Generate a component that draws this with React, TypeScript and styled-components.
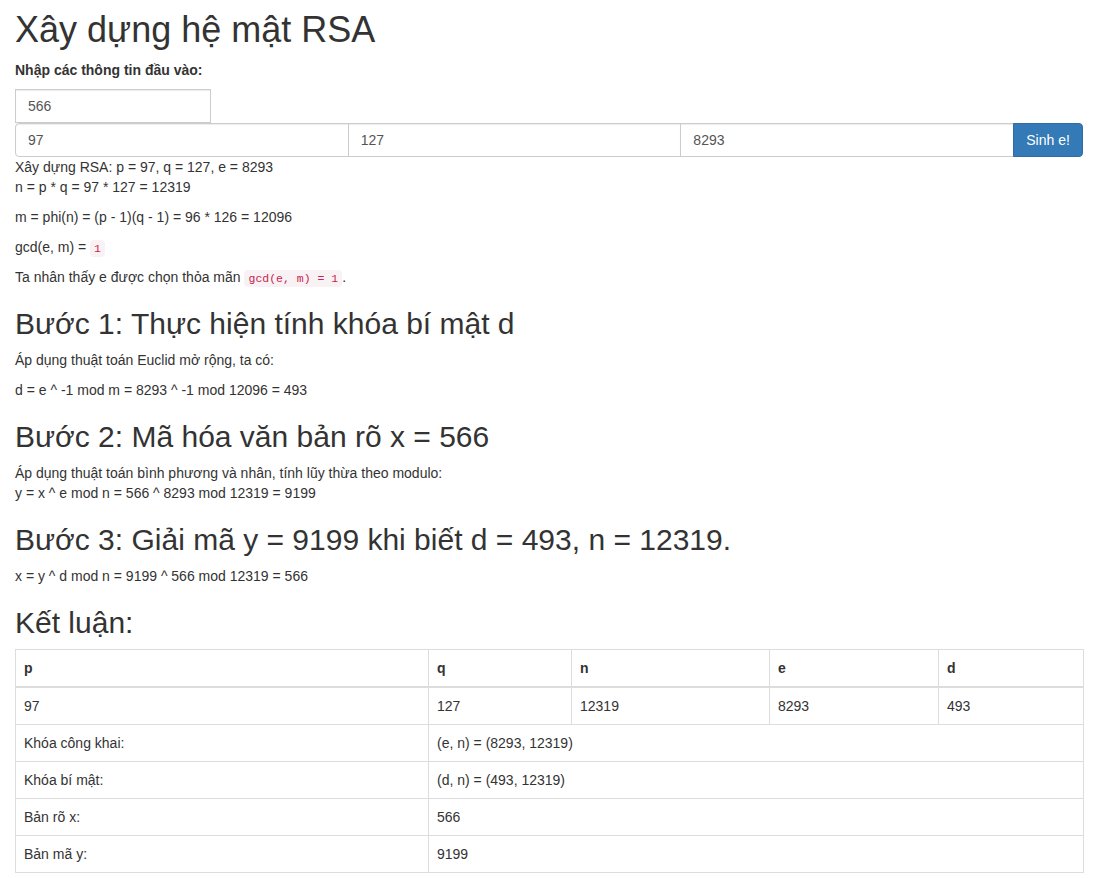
import React from "react";
import styled, { createGlobalStyle } from "styled-components";

const Global = createGlobalStyle`
  html, body { margin: 0; padding: 0; background: #fff; }
  body {
    font-family: "Liberation Sans", Arial, sans-serif;
    font-size: 14px;
    line-height: 20px;
    color: #333;
  }
  * { box-sizing: border-box; }
`;

const Page = styled.div`
  width: 1068px;
  margin-left: 15px;
  padding-top: 10px;
`;

const H1 = styled.h1`
  font-size: 36px;
  font-weight: 500;
  line-height: 39.6px;
  margin: 0 0 10px;
`;

const H2 = styled.h2`
  font-size: 30px;
  font-weight: 500;
  line-height: 33px;
  margin: 20px 0 10px;
`;

const Label = styled.label`
  display: block;
  font-weight: bold;
  margin-bottom: 9px;
`;

const Input = styled.input<{ $w?: number; $pos?: "first" | "mid" | "single" }>`
  display: block;
  height: 34px;
  padding: 6px 12px;
  font-family: "Liberation Sans", Arial, sans-serif;
  font-size: 14px;
  color: #555;
  background: #fff;
  border: 1px solid #ccc;
  border-radius: ${(p) => (p.$pos === "first" ? "4px 0 0 4px" : "0")};
  box-shadow: inset 0 1px 1px rgba(0, 0, 0, 0.075);
  width: ${(p) => (p.$w ? `${p.$w}px` : "100%")};
  flex: ${(p) => (p.$w ? "none" : "1 1 0")};
  min-width: 0;
  margin-left: ${(p) => (p.$pos === "mid" ? "-1px" : "0")};
  outline: none;
`;

const Group = styled.div`
  display: flex;
  height: 34px;
`;

const Button = styled.button`
  width: 70px;
  flex: none;
  height: 34px;
  margin-left: -1px;
  padding: 6px 12px;
  font-family: "Liberation Sans", Arial, sans-serif;
  font-size: 14px;
  color: #fff;
  background: #337ab7;
  border: 1px solid #2e6da4;
  border-radius: 0 4px 4px 0;
  cursor: pointer;
`;

const P = styled.p`
  margin: 0 0 10px;
`;

const Code = styled.code`
  padding: 2px 4px;
  font-family: "Liberation Mono", "DejaVu Sans Mono", monospace;
  font-size: 11.5px;
  line-height: 1;
  color: #c7254e;
  background: #f9f2f4;
  border-radius: 4px;
`;

const Table = styled.table`
  width: 100%;
  border-collapse: collapse;
  border-spacing: 0;
  border: 1px solid #ddd;
  margin-bottom: 20px;
  table-layout: fixed;
`;

const Th = styled.th`
  text-align: left;
  font-weight: bold;
  padding: 8px;
  line-height: 20px;
  border: 1px solid #ddd;
  border-bottom: 2px solid #ddd;
  vertical-align: bottom;
`;

const Td = styled.td`
  padding: 8px;
  line-height: 20px;
  border: 1px solid #ddd;
  vertical-align: top;
`;

export default function App() {
  return (
    <>
      <Global />
      <Page>
        <H1>Xây dựng hệ mật RSA</H1>
        <Label>Nhập các thông tin đầu vào:</Label>
        <Input $w={196} $pos="single" defaultValue="566" />
        <Group>
          <Input $pos="first" defaultValue="97" />
          <Input $pos="mid" defaultValue="127" />
          <Input $pos="mid" defaultValue="8293" />
          <Button>Sinh e!</Button>
        </Group>
        <P>
          Xây dựng RSA: p = 97, q = 127, e = 8293
          <br />n = p * q = 97 * 127 = 12319
        </P>
        <P>m = phi(n) = (p - 1)(q - 1) = 96 * 126 = 12096</P>
        <P>
          gcd(e, m) = <Code>1</Code>
        </P>
        <P>
          Ta nhân thấy e được chọn thỏa mãn <Code>gcd(e, m) = 1</Code>.
        </P>

        <H2>Bước 1: Thực hiện tính khóa bí mật d</H2>
        <P>Áp dụng thuật toán Euclid mở rộng, ta có:</P>
        <P>d = e ^ -1 mod m = 8293 ^ -1 mod 12096 = 493</P>

        <H2>Bước 2: Mã hóa văn bản rõ x = 566</H2>
        <P>
          Áp dụng thuật toán bình phương và nhân, tính lũy thừa theo modulo:
          <br />y = x ^ e mod n = 566 ^ 8293 mod 12319 = 9199
        </P>

        <H2>Bước 3: Giải mã y = 9199 khi biết d = 493, n = 12319.</H2>
        <P>x = y ^ d mod n = 9199 ^ 566 mod 12319 = 566</P>

        <H2>Kết luận:</H2>
        <Table>
          <colgroup>
            <col style={{ width: 413 }} />
            <col style={{ width: 143 }} />
            <col style={{ width: 198 }} />
            <col style={{ width: 169 }} />
            <col style={{ width: 145 }} />
          </colgroup>
          <thead>
            <tr>
              <Th>p</Th>
              <Th>q</Th>
              <Th>n</Th>
              <Th>e</Th>
              <Th>d</Th>
            </tr>
          </thead>
          <tbody>
            <tr>
              <Td>97</Td>
              <Td>127</Td>
              <Td>12319</Td>
              <Td>8293</Td>
              <Td>493</Td>
            </tr>
            <tr>
              <Td>Khóa công khai:</Td>
              <Td colSpan={4}>(e, n) = (8293, 12319)</Td>
            </tr>
            <tr>
              <Td>Khóa bí mật:</Td>
              <Td colSpan={4}>(d, n) = (493, 12319)</Td>
            </tr>
            <tr>
              <Td>Bản rõ x:</Td>
              <Td colSpan={4}>566</Td>
            </tr>
            <tr>
              <Td>Bản mã y:</Td>
              <Td colSpan={4}>9199</Td>
            </tr>
          </tbody>
        </Table>
      </Page>
    </>
  );
}
